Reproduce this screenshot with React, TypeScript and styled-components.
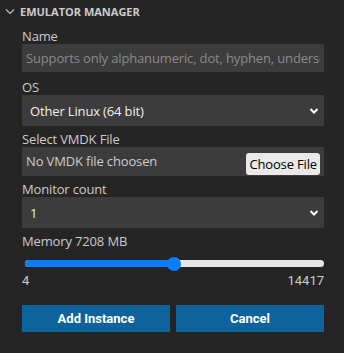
import React from "react";
import styled, { createGlobalStyle } from "styled-components";

const GlobalStyle = createGlobalStyle`
  html, body {
    margin: 0;
    padding: 0;
    background: #252526;
  }
  body {
    font-family: "Open Sans", "Noto Sans", sans-serif;
    color: #cccccc;
  }
`;

const MIN = 4;
const MAX = 14417;
const VALUE = 7208;

const App = (): JSX.Element => {
  const percent = ((VALUE - MIN) / (MAX - MIN)) * 100;

  return (
    <>
      <GlobalStyle />
      <Panel>
        <Header>
          <Chevron width="16" height="16" viewBox="0 0 16 16">
            <path d="M4 6.5l4 4 4-4" fill="none" stroke="#c5c5c5" strokeWidth="1.1" />
          </Chevron>
          <Title>EMULATOR MANAGER</Title>
        </Header>
        <Form>
          <Field>
            <Label>Name</Label>
            <TextInput placeholder="Supports only alphanumeric, dot, hyphen, underscore" />
          </Field>
          <Field>
            <Label>OS</Label>
            <Select>
              <span>Other Linux (64 bit)</span>
              <SelectArrow />
            </Select>
          </Field>
          <Field>
            <Label>Select VMDK File</Label>
            <FileBox>
              <span>No VMDK file choosen</span>
              <ChooseButton>Choose File</ChooseButton>
            </FileBox>
          </Field>
          <Field>
            <Label>Monitor count</Label>
            <Select>
              <span>1</span>
              <SelectArrow />
            </Select>
          </Field>
          <Field>
            <Label>Memory {VALUE} MB</Label>
            <Slider>
              <Track>
                <Fill style={{ width: `${percent}%` }} />
                <Thumb style={{ left: `${percent}%` }} />
              </Track>
            </Slider>
            <Range>
              <span>{MIN}</span>
              <span>{MAX}</span>
            </Range>
          </Field>
          <Actions>
            <ActionButton>Add Instance</ActionButton>
            <ActionButton>Cancel</ActionButton>
          </Actions>
        </Form>
      </Panel>
    </>
  );
};

const SelectArrow = () => (
  <ArrowIcon width="10" height="8" viewBox="0 0 10 8">
    <path d="M1.5 2l3.5 3.5L8.5 2" fill="none" stroke="#ffffff" strokeWidth="2" />
  </ArrowIcon>
);

export default App;

const Panel = styled.div`
  width: 344px;
  height: 353px;
  background: #252526;
  box-sizing: border-box;
`;

const Header = styled.div`
  display: flex;
  align-items: center;
  height: 22px;
  padding-left: 2px;
`;

const Chevron = styled.svg`
  margin-right: 2px;
`;

const Title = styled.span`
  font-size: 11px;
  font-weight: 700;
  color: #cccccc;
`;

const Form = styled.div`
  display: flex;
  flex-direction: column;
  padding: 6px 20px 0 22px;
  letter-spacing: -0.15px;
`;

const Field = styled.div`
  display: flex;
  flex-direction: column;
  margin-bottom: 5px;
`;

const Label = styled.label`
  font-size: 13px;
  line-height: 16px;
  color: #cccccc;
`;

const TextInput = styled.input`
  height: 28px;
  box-sizing: border-box;
  border: none;
  outline: none;
  background: #3c3c3c;
  color: #cccccc;
  font-family: inherit;
  font-size: 13px;
  letter-spacing: -0.15px;
  padding: 0 4px;
  margin-bottom: 2px;

  &::placeholder {
    color: #8b8b8b;
  }
`;

const Select = styled.div`
  display: flex;
  align-items: center;
  justify-content: space-between;
  height: 31px;
  box-sizing: border-box;
  background: #3c3c3c;
  color: #f0f0f0;
  font-size: 13px;
  padding: 0 5px 0 8px;
`;

const ArrowIcon = styled.svg`
  display: block;
`;

const FileBox = styled.div`
  display: flex;
  align-items: flex-end;
  justify-content: space-between;
  height: 29px;
  box-sizing: border-box;
  background: #3c3c3c;
  color: #cccccc;
  font-size: 13px;
  padding: 0 4px 1px 4px;

  & > span {
    align-self: center;
  }
`;

const ChooseButton = styled.button`
  height: 22px;
  padding: 0 3px;
  border: none;
  border-radius: 3px;
  background: #e9e9e9;
  color: #000000;
  font-family: inherit;
  font-size: 13px;
  letter-spacing: -0.15px;
`;

const Slider = styled.div`
  padding: 8px 0 0 3px;
  height: 14px;
`;

const Track = styled.div`
  position: relative;
  height: 7px;
  margin-top: 3px;
  border-radius: 4px;
  background: #e6e6e6;
`;

const Fill = styled.div`
  height: 100%;
  border-radius: 4px 0 0 4px;
  background: #0a7cff;
`;

const Thumb = styled.div`
  position: absolute;
  top: 50%;
  width: 14px;
  height: 14px;
  border-radius: 50%;
  background: #0a7cff;
  transform: translate(-50%, -50%);
`;

const Range = styled.div`
  display: flex;
  justify-content: space-between;
  margin-top: 2px;
  font-family: Roboto, "Liberation Sans", sans-serif;
  font-size: 13px;
  line-height: 15px;
  letter-spacing: 0;
  color: #cccccc;
`;

const Actions = styled.div`
  display: grid;
  grid-template-columns: 1fr 1fr;
  gap: 6px;
  margin-top: 12px;
`;

const ActionButton = styled.button`
  height: 27px;
  border: none;
  background: #0e639c;
  color: #ffffff;
  font-family: Roboto, "Liberation Sans", sans-serif;
  font-size: 13px;
  font-weight: 700;
`;
